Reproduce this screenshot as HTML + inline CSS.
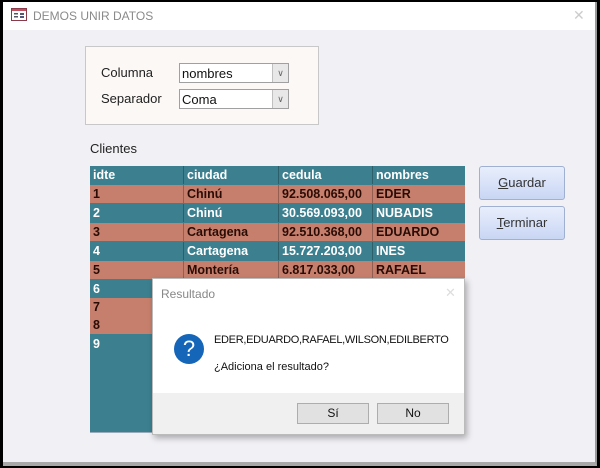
<!DOCTYPE html>
<html><head><meta charset="utf-8"><style>
*{margin:0;padding:0;box-sizing:border-box}
body{width:600px;height:468px;background:#000;position:relative;overflow:hidden;font-family:"Liberation Sans",sans-serif}
.win{position:absolute;left:3px;top:2px;width:594px;height:464px;background:#f1f0f4;border-right:2px solid #9a9a9a;border-bottom:4px solid #a8a8a8}
.title{position:absolute;left:0;top:0;width:592px;height:28px;background:#fff}
.title span{position:absolute;left:30px;top:7px;font-size:12px;color:#8a8a8a}
.abs{position:absolute}
.panel{left:82px;top:44px;width:234px;height:79px;background:#fbf8f6;border:1px solid #c8c8c8}
.lbl{font-size:13px;color:#222}
.combo{width:110px;height:20px;background:#fff;border:1px solid #a0a0a0;font-size:13px;padding:2px 0 0 2px;color:#111}
.combo i{position:absolute;right:0;top:0;width:16px;height:18px;background:#e8e8e8;border-left:1px solid #c0c0c0;font-style:normal;font-size:9px;text-align:center;line-height:18px;color:#666}
.tbl{left:87px;top:164px;width:375px;height:267px;background:#3c7f8f;border-bottom:1px solid #9ab}
.row{position:absolute;left:0;width:375px;height:18px;font-size:12.5px;font-weight:bold}
.row div{position:absolute;top:0;height:18px;padding:2px 0 0 3px}
.t{background:#3c7f8f;color:#fff}
.s{background:#c67f6c;color:#2a0c05}
.t div,.s div{border-left:1px solid rgba(0,0,0,.25)}
.btn{width:86px;height:34px;border:1px solid #9fb0d0;border-radius:3px;background:linear-gradient(#e8eefc,#c9d6f4);font-size:13px;text-align:center;line-height:32px;color:#333}
.dlg{left:149px;top:276px;width:313px;height:157px;background:#fff;border:1px solid #bbb;box-shadow:2px 3px 6px rgba(0,0,0,.3)}
.foot{position:absolute;left:0;bottom:0;width:311px;height:41px;background:#f0f0f0}
.db{position:absolute;top:124px;width:72px;height:21px;background:#e1e1e1;border:1px solid #adadad;font-size:12px;text-align:center;line-height:19px;color:#111}
</style></head><body>
<div class="win">
 <div class="title">
  <svg class="abs" style="left:8px;top:6px" width="16" height="13" viewBox="0 0 16 13"><rect x=".5" y=".5" width="15" height="12" fill="#fff" stroke="#8a3a4a"/><rect x="1" y="1" width="14" height="2" fill="#c05060"/><rect x="3" y="5" width="4" height="1.5" fill="#556"/><rect x="9" y="5" width="4" height="2" fill="#557"/><rect x="3" y="8" width="4" height="1.5" fill="#556"/><rect x="9" y="8" width="4" height="2" fill="#557"/></svg>
  <span>DEMOS UNIR DATOS</span>
  <span style="left:570px;top:5px;font-size:14px;color:#ccc">✕</span>
 </div>
 <div class="abs panel">
  <div class="abs lbl" style="left:15px;top:18px">Columna</div>
  <div class="abs lbl" style="left:15px;top:44px">Separador</div>
  <div class="abs combo" style="left:93px;top:16px">nombres<i>∨</i></div>
  <div class="abs combo" style="left:93px;top:42px">Coma<i>∨</i></div>
 </div>
 <div class="abs lbl" style="left:87px;top:139px">Clientes</div>
 <div class="abs tbl">
  <div class="row t" style="top:0"><div style="left:0;width:93px;border:0">idte</div><div style="left:93px;width:95px">ciudad</div><div style="left:188px;width:94px">cedula</div><div style="left:282px;width:93px">nombres</div></div>
  <div class="row s" style="top:19px"><div style="left:0;width:93px;border:0">1</div><div style="left:93px;width:95px">Chinú</div><div style="left:188px;width:94px">92.508.065,00</div><div style="left:282px;width:93px">EDER</div></div>
  <div class="row t" style="top:38px"><div style="left:0;width:93px;border:0">2</div><div style="left:93px;width:95px">Chinú</div><div style="left:188px;width:94px">30.569.093,00</div><div style="left:282px;width:93px">NUBADIS</div></div>
  <div class="row s" style="top:57px"><div style="left:0;width:93px;border:0">3</div><div style="left:93px;width:95px">Cartagena</div><div style="left:188px;width:94px">92.510.368,00</div><div style="left:282px;width:93px">EDUARDO</div></div>
  <div class="row t" style="top:76px"><div style="left:0;width:93px;border:0">4</div><div style="left:93px;width:95px">Cartagena</div><div style="left:188px;width:94px">15.727.203,00</div><div style="left:282px;width:93px">INES</div></div>
  <div class="row s" style="top:95px"><div style="left:0;width:93px;border:0">5</div><div style="left:93px;width:95px">Montería</div><div style="left:188px;width:94px">6.817.033,00</div><div style="left:282px;width:93px">RAFAEL</div></div>
  <div class="row t" style="top:114px"><div style="left:0;width:93px;border:0">6</div></div>
  <div class="row s" style="top:132px"><div style="left:0;width:93px;border:0">7</div></div>
  <div class="row s" style="top:150px"><div style="left:0;width:93px;border:0">8</div></div>
  <div class="row t" style="top:169px"><div style="left:0;width:93px;border:0">9</div></div>
 </div>
 <div class="abs btn" style="left:476px;top:164px"><u>G</u>uardar</div>
 <div class="abs btn" style="left:476px;top:204px"><u>T</u>erminar</div>
 <div class="abs dlg">
  <div class="abs" style="left:8px;top:8px;font-size:12px;color:#888">Resultado</div>
  <div class="abs" style="left:292px;top:6px;font-size:13px;color:#ddd">✕</div>
  <div class="abs" style="left:21px;top:55px;width:30px;height:30px;border-radius:50%;background:#1565b8;color:#fff;font-size:22px;text-align:center;line-height:30px">?</div>
  <div class="abs" style="left:61px;top:55px;font-size:11px;letter-spacing:-0.3px;color:#111">EDER,EDUARDO,RAFAEL,WILSON,EDILBERTO</div>
  <div class="abs" style="left:61px;top:82px;font-size:11px;color:#111">¿Adiciona el resultado?</div>
  <div class="foot"></div>
  <div class="db" style="left:144px">Sí</div>
  <div class="db" style="left:224px">No</div>
 </div>
</div>
</body></html>
